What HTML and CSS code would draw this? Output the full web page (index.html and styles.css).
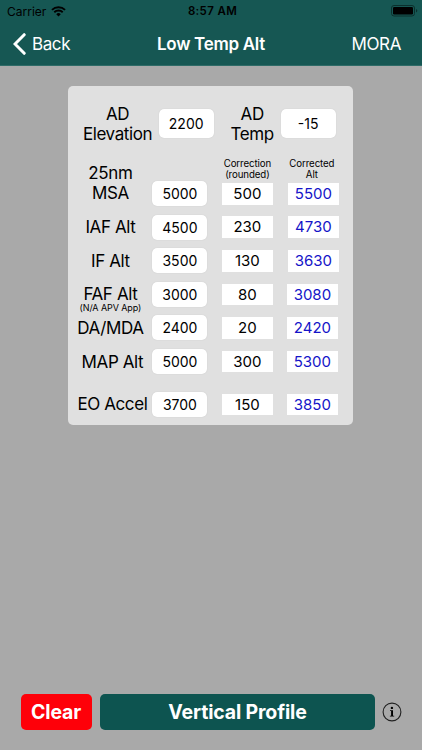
FILE: index.html
```
<!DOCTYPE html>
<html lang="en">
<head>
    <meta charset="utf-8">
    <title>Low Temp Alt</title>
    <link rel="stylesheet" href="styles.css">
</head>
<body>
<header class="header">
    <div class="status-bar">
        <div class="carrier">
            <span>Carrier</span>
            <svg class="wifi" viewBox="0 0 16 11" width="15" height="11">
                <path d="M1 3.8a10 10 0 0 1 14 0M3.5 6.3a6.4 6.4 0 0 1 9 0" fill="none" stroke="#000" stroke-width="2"/>
                <path d="M5.6 8.3a3.5 3.5 0 0 1 4.8 0L8 10.8z"/>
            </svg>
        </div>
        <div class="time">8:57 AM</div>
        <svg class="battery" viewBox="0 0 27 12" width="27" height="12">
            <rect x=".5" y=".5" width="23" height="10.5" rx="2.5" fill="none" stroke="#0b302d"/>
            <rect x="2" y="2" width="20" height="7.5" rx="1.2"/>
            <path d="M25 4v3.5q1.3-.5 1.3-1.75T25 4z" fill="#0b302d"/>
        </svg>
    </div>
    <nav class="nav-bar">
        <div class="back">
            <svg viewBox="0 0 13 22" width="13" height="22">
                <path d="M11.2 1.7L2 11l9.2 9.3" fill="none" stroke="#fff" stroke-width="3" stroke-linecap="round"/>
            </svg>
            <span>Back</span>
        </div>
        <div class="title">Low Temp Alt</div>
        <div class="mora">MORA</div>
    </nav>
</header>
<main class="content">
    <div class="panel">
        <div class="airfield">
            <div class="airfield-label elevation">AD<br>Elevation</div>
            <div class="field tall">2200</div>
            <div class="airfield-label temp">AD<br>Temp</div>
            <div class="field tall">-15</div>
        </div>
        <div class="row first">
            <div class="label">25nm<br>MSA</div>
            <div class="field">5000</div>
            <div class="column">
                <div class="heading">Correction<br>(rounded)</div>
                <div class="result">500</div>
            </div>
            <div class="column">
                <div class="heading corrected-heading">Corrected<br>Alt</div>
                <div class="result corrected">5500</div>
            </div>
        </div>
        <div class="row">
            <div class="label">IAF Alt</div>
            <div class="field">4500</div>
            <div class="result">230</div>
            <div class="result corrected">4730</div>
        </div>
        <div class="row">
            <div class="label">IF Alt</div>
            <div class="field">3500</div>
            <div class="result">130</div>
            <div class="result corrected">3630</div>
        </div>
        <div class="row narrow">
            <div class="label">FAF Alt<div class="note">(N/A APV App)</div></div>
            <div class="field">3000</div>
            <div class="result">80</div>
            <div class="result corrected">3080</div>
        </div>
        <div class="row narrow">
            <div class="label">DA/MDA</div>
            <div class="field">2400</div>
            <div class="result">20</div>
            <div class="result corrected">2420</div>
        </div>
        <div class="row narrow">
            <div class="label shifted">MAP Alt</div>
            <div class="field">5000</div>
            <div class="result">300</div>
            <div class="result corrected">5300</div>
        </div>
        <div class="row narrow last">
            <div class="label shifted">EO Accel</div>
            <div class="field">3700</div>
            <div class="result">150</div>
            <div class="result corrected">3850</div>
        </div>
    </div>
</main>
<footer class="footer">
    <button class="button clear">Clear</button>
    <button class="button profile">Vertical Profile</button>
    <svg class="info" viewBox="0 0 20 20" width="20" height="20">
        <circle cx="10" cy="10" r="8.9" fill="none" stroke="#222" stroke-width="1.1"/>
        <circle cx="9.9" cy="5.9" r="1.2"/>
        <path d="M8 8.3h3v5.4h1.2v.9H7.9v-.9h1.2V9.1H8z"/>
    </svg>
</footer>
</body>
</html>
```

FILE: styles.css
```
* {
    box-sizing: border-box;
}

body {
    margin: 0;
    height: 750px;
    display: flex;
    flex-direction: column;
    background-color: #a9a9a9;
    color: #000;
    font-family: Inter, "Liberation Sans", sans-serif;
    overflow: hidden;
}

.header {
    height: 66px;
    background-color: #165753;
    border-bottom: 1px solid #2e6b67;
}

.status-bar {
    height: 22px;
    display: grid;
    grid-template-columns: 1fr auto 1fr;
    align-items: center;
    padding: 0 4px 0 7px;
    font-size: 12px;
}

.carrier {
    display: flex;
    align-items: center;
    gap: 5px;
}

.time {
    font-weight: 600;
    font-size: 11.5px;
    letter-spacing: 0.35px;
}

.battery {
    justify-self: end;
}

.nav-bar {
    height: 43px;
    display: grid;
    grid-template-columns: 1fr auto 1fr;
    align-items: center;
    padding: 0 21px 0 13px;
    color: #fff;
    font-size: 17px;
    letter-spacing: -0.4px;
}

.back {
    display: flex;
    align-items: center;
    gap: 6px;
}

.title {
    padding-left: 8px;
    font-weight: 600;
    letter-spacing: -0.3px;
}

.mora {
    text-align: right;
}

.content {
    flex: 1;
}

.panel {
    width: 285px;
    height: 339px;
    margin: 20px 0 0 68.4px;
    padding-top: 18px;
    border-radius: 5px;
    background-color: #e0e0e0;
}

.airfield {
    height: 40px;
    display: flex;
    align-items: center;
}

.airfield-label, .label {
    text-align: center;
    font-size: 17px;
    line-height: 20px;
    letter-spacing: -0.4px;
    white-space: nowrap;
}

.elevation {
    width: 80.3px;
    margin-left: 10px;
    padding-right: 2px;
}

.temp {
    width: 67px;
    padding-left: 10px;
}

.field {
    width: 55px;
    height: 25px;
    line-height: 25px;
    border-radius: 5px;
    background-color: #fff;
    box-shadow: 0 0 1px #bbb;
    text-align: center;
    font-size: 14px;
}

.tall {
    height: 29px;
    line-height: 29px;
    margin-top: -1px;
}

.row {
    height: 33.6px;
    display: grid;
    grid-template-columns: 84px 69.5px 66px 51px;
    align-items: center;
}

.narrow {
    grid-template-columns: 84px 69.5px 65px 51px;
}

.first {
    height: 66.4px;
    align-items: end;
    padding-bottom: 4.4px;
}

.first .result {
    margin-bottom: 1.5px;
}

.first .label {
    padding-bottom: 3px;
}

.last {
    margin-top: 9.3px;
}

.label {
    position: relative;
}

.shifted {
    padding-left: 4px;
}

.heading {
    width: 51px;
    margin-bottom: 2.5px;
    text-align: center;
    font-size: 9.7px;
    line-height: 11.5px;
    letter-spacing: -0.1px;
}

.corrected-heading {
    padding-right: 3px;
}

.note {
    position: absolute;
    top: 18px;
    left: 0;
    width: 100%;
    font-size: 9px;
    line-height: 11px;
    letter-spacing: -0.1px;
}

.result {
    width: 51px;
    height: 21.5px;
    line-height: 22px;
    background-color: #fff;
    text-align: center;
    font-size: 15px;
}

.corrected {
    color: #1414c8;
}

.footer {
    display: flex;
    align-items: center;
    padding: 0 20px 20px 21px;
}

.button {
    height: 36px;
    padding: 0;
    border: none;
    border-radius: 5px;
    color: #fff;
    font-family: inherit;
    font-size: 19.5px;
    font-weight: 700;
    letter-spacing: -0.15px;
}

.clear {
    width: 71px;
    padding-right: 1px;
    margin-right: 8px;
    background-color: #fe0009;
}

.profile {
    width: 275px;
    margin-right: 7px;
    background-color: #0d5450;
}
```
